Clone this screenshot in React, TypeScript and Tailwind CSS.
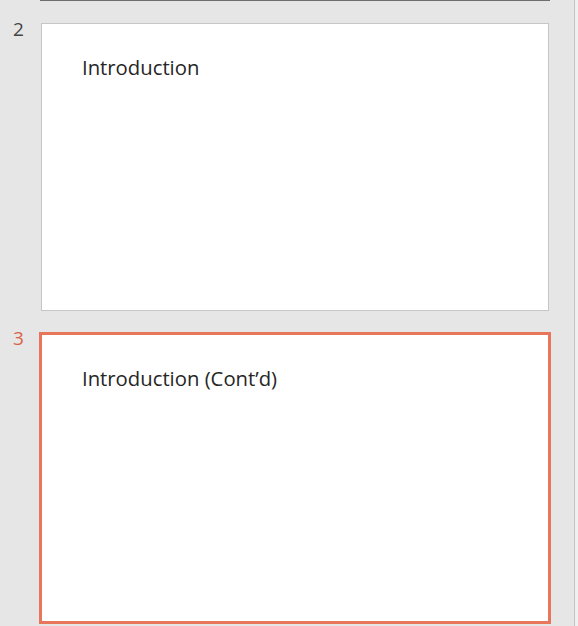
export default function App() {
  const font = { fontFamily: '"Open Sans", "Noto Sans", sans-serif' };
  return (
    <div className="w-[578px] h-[626px] bg-[#e6e6e6] flex overflow-hidden" style={font}>
      <div className="flex-1 flex flex-col">
        <div className="ml-[40px] w-[510px] h-px bg-[#6e6e6e]" />
        <div className="flex mt-[22px]">
          <div className="w-[41px] pl-[13px] text-[19px] leading-[12px] text-[#444444] pt-0">2</div>
          <div className="w-[508px] h-[288px] bg-white border border-[#c6c6c6] pl-[40px] pt-[31px]">
            <div className="text-[20.3px] leading-[24px] text-[#262626]">Introduction</div>
          </div>
        </div>
        <div className="flex mt-[21px]">
          <div className="w-[39px] pl-[13px] text-[19px] leading-[12px] text-[#d9624a] pt-0">3</div>
          <div className="w-[512px] h-[292px] bg-white border-[3px] border-[#e8765a] pl-[40px] pt-[31px]">
            <div className="text-[20.3px] leading-[24px] text-[#262626]">Introduction (Cont’d)</div>
          </div>
        </div>
      </div>
      <div className="w-[4px] flex">
        <div className="w-px h-full bg-[#c4c4c4]" />
        <div className="flex-1 h-full bg-[#f0f0f0]" />
      </div>
    </div>
  );
}
